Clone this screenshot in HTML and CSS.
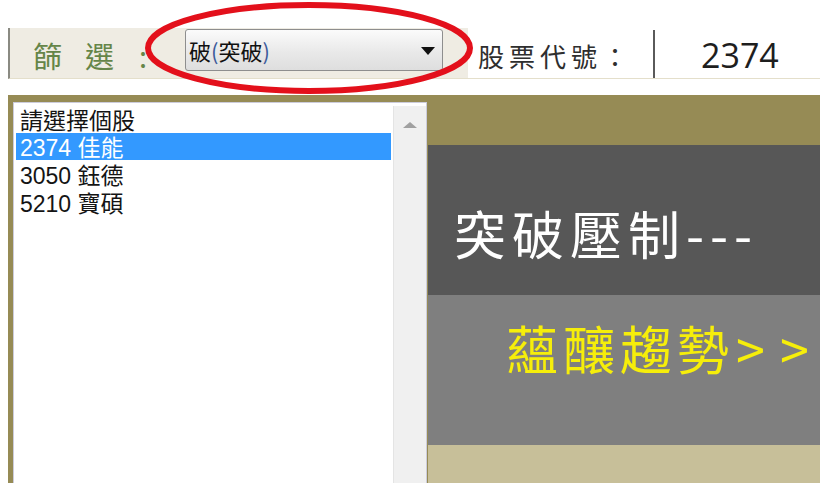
FILE: index.html
```html
<!DOCTYPE html>
<html lang="zh-Hant">
<head>
<meta charset="utf-8">
<title>篩選</title>
<link rel="stylesheet" href="styles.css">
</head>
<body>
<div class="toolbar">
  <div class="filter">
    <div class="lbl"><span>篩</span><span>選</span><span class="colon">:</span></div>
    <div class="select">
      <span class="sel-text">破<span class="paren">(</span>突破<span class="paren">)</span></span>
      <span class="caret"></span>
    </div>
  </div>
  <div class="code-label">股票代號：</div>
  <div class="sep"></div>
  <div class="code">2374</div>
</div>
<div class="main">
  <div class="listwrap">
    <div class="listbox">
      <div class="items">
        <div class="item">請選擇個股</div>
        <div class="item selected">2374 佳能</div>
        <div class="item">3050 鈺德</div>
        <div class="item">5210 寶碩</div>
      </div>
      <div class="scroll"><span class="up"></span></div>
    </div>
  </div>
  <div class="panel">
    <div class="band dark"><span class="headline">突破壓制---</span></div>
    <div class="band gray"><span class="trend">蘊釀趨勢<span class="gt first">&gt;</span><span class="gt">&gt;</span></span></div>
    <div class="band beige"></div>
  </div>
</div>
<svg class="circle" width="340" height="100" viewBox="0 0 340 100">
  <ellipse cx="164" cy="48" rx="161" ry="43" fill="none" stroke="#e3101b" stroke-width="6"/>
</svg>
</body>
</html>
```
FILE: styles.css
```css
html, body {
  margin: 0;
  padding: 0;
  background: #ffffff;
  width: 820px;
  height: 483px;
  overflow: hidden;
  font-family: "Noto Sans CJK TC", "Noto Sans", sans-serif;
}

.toolbar {
  display: flex;
  margin: 28px 0 0 8px;
  height: 50px;
  border-left: 2px solid #8a8a82;
  border-bottom: 1px solid #e4dfcb;
}

.filter {
  display: flex;
  width: 458px;
  flex-shrink: 0;
  background: #efece3;
  padding-left: 23px;
  box-sizing: border-box;
}

.lbl {
  display: flex;
  align-items: center;
  width: 152px;
  flex-shrink: 0;
  font-size: 29px;
  color: #658548;
  gap: 23px;
  padding-top: 4px;
  box-sizing: border-box;
}

.lbl .colon {
  margin-left: 2px;
}

.select {
  display: flex;
  align-items: center;
  justify-content: space-between;
  width: 258px;
  height: 42px;
  margin-top: 1px;
  box-sizing: border-box;
  border: 1px solid #8e8e8e;
  border-radius: 3px;
  background: linear-gradient(#fbfbfb, #e9e9e9 55%, #dedede);
  padding: 0 7px 0 3px;
  flex-shrink: 0;
}

.sel-text {
  font-size: 22px;
  color: #111;
  line-height: 1;
}

.paren {
  color: #3c5a9a;
}

.caret {
  width: 0;
  height: 0;
  border-left: 7px solid transparent;
  border-right: 7px solid transparent;
  border-top: 8px solid #111;
  margin-top: 2px;
}

.code-label {
  display: flex;
  align-items: center;
  width: 165px;
  margin-left: 10px;
  flex-shrink: 0;
  font-size: 26px;
  letter-spacing: 5px;
  color: #2e2e2e;
  padding-top: 5px;
  box-sizing: border-box;
  white-space: nowrap;
}

.sep {
  width: 2px;
  margin-left: 10px;
  margin-top: 2px;
  background: #5a5a5a;
  flex-shrink: 0;
}

.code {
  display: flex;
  align-items: center;
  margin-left: 46px;
  font-family: "Open Sans", "Liberation Sans", sans-serif;
  font-size: 34px;
  color: #1e1e1e;
  padding-top: 4px;
}

.main {
  display: flex;
  margin: 16px 0 0 8px;
  height: 388px;
  background: #968b55;
  overflow: hidden;
}

.listwrap {
  padding: 7px 0 0 5px;
  flex-shrink: 0;
}

.listbox {
  display: flex;
  width: 414px;
  height: 400px;
  box-sizing: border-box;
  background: #ffffff;
  border: 1px solid #ccccdc;
}

.items {
  flex: 1;
  padding: 2px 2px 0 2px;
}

.item {
  height: 25.2px;
  padding-top: 2.5px;
  line-height: 27.7px;
  padding-left: 4px;
  font-family: "Liberation Sans", "Noto Sans CJK TC", sans-serif;
  font-size: 23px;
  color: #141414;
  white-space: nowrap;
}

.item.selected {
  background: #3399ff;
  color: #ffffff;
}

.scroll {
  display: flex;
  justify-content: center;
  width: 32px;
  margin-top: 3px;
  background: #f0f0f0;
  border-left: 1px solid #e4e4e4;
}

.up {
  width: 0;
  height: 0;
  margin-top: 16px;
  border-left: 7px solid transparent;
  border-right: 7px solid transparent;
  border-bottom: 6px solid #a0a0a0;
}

.panel {
  flex: 1;
  display: flex;
  flex-direction: column;
  padding-top: 50px;
  margin-left: 1px;
}

.band {
  flex-shrink: 0;
}

.dark {
  height: 150px;
  background: #575757;
  padding: 62px 0 0 26px;
  box-sizing: border-box;
}

.headline {
  font-size: 52px;
  line-height: 52px;
  letter-spacing: 6px;
  color: #ffffff;
  white-space: nowrap;
}

.gray {
  height: 150px;
  background: #7f7f7f;
  padding: 27px 0 0 78px;
  box-sizing: border-box;
}

.trend {
  font-size: 52px;
  line-height: 52px;
  letter-spacing: 5px;
  color: #f6ee0a;
  white-space: nowrap;
}

.trend .gt {
  letter-spacing: 0;
  margin-left: 15px;
}

.trend .gt.first {
  margin-left: 2px;
}

.beige {
  flex: 1;
  background: #c7bf99;
}

.circle {
  position: absolute;
  left: 145px;
  top: 0;
}
```
